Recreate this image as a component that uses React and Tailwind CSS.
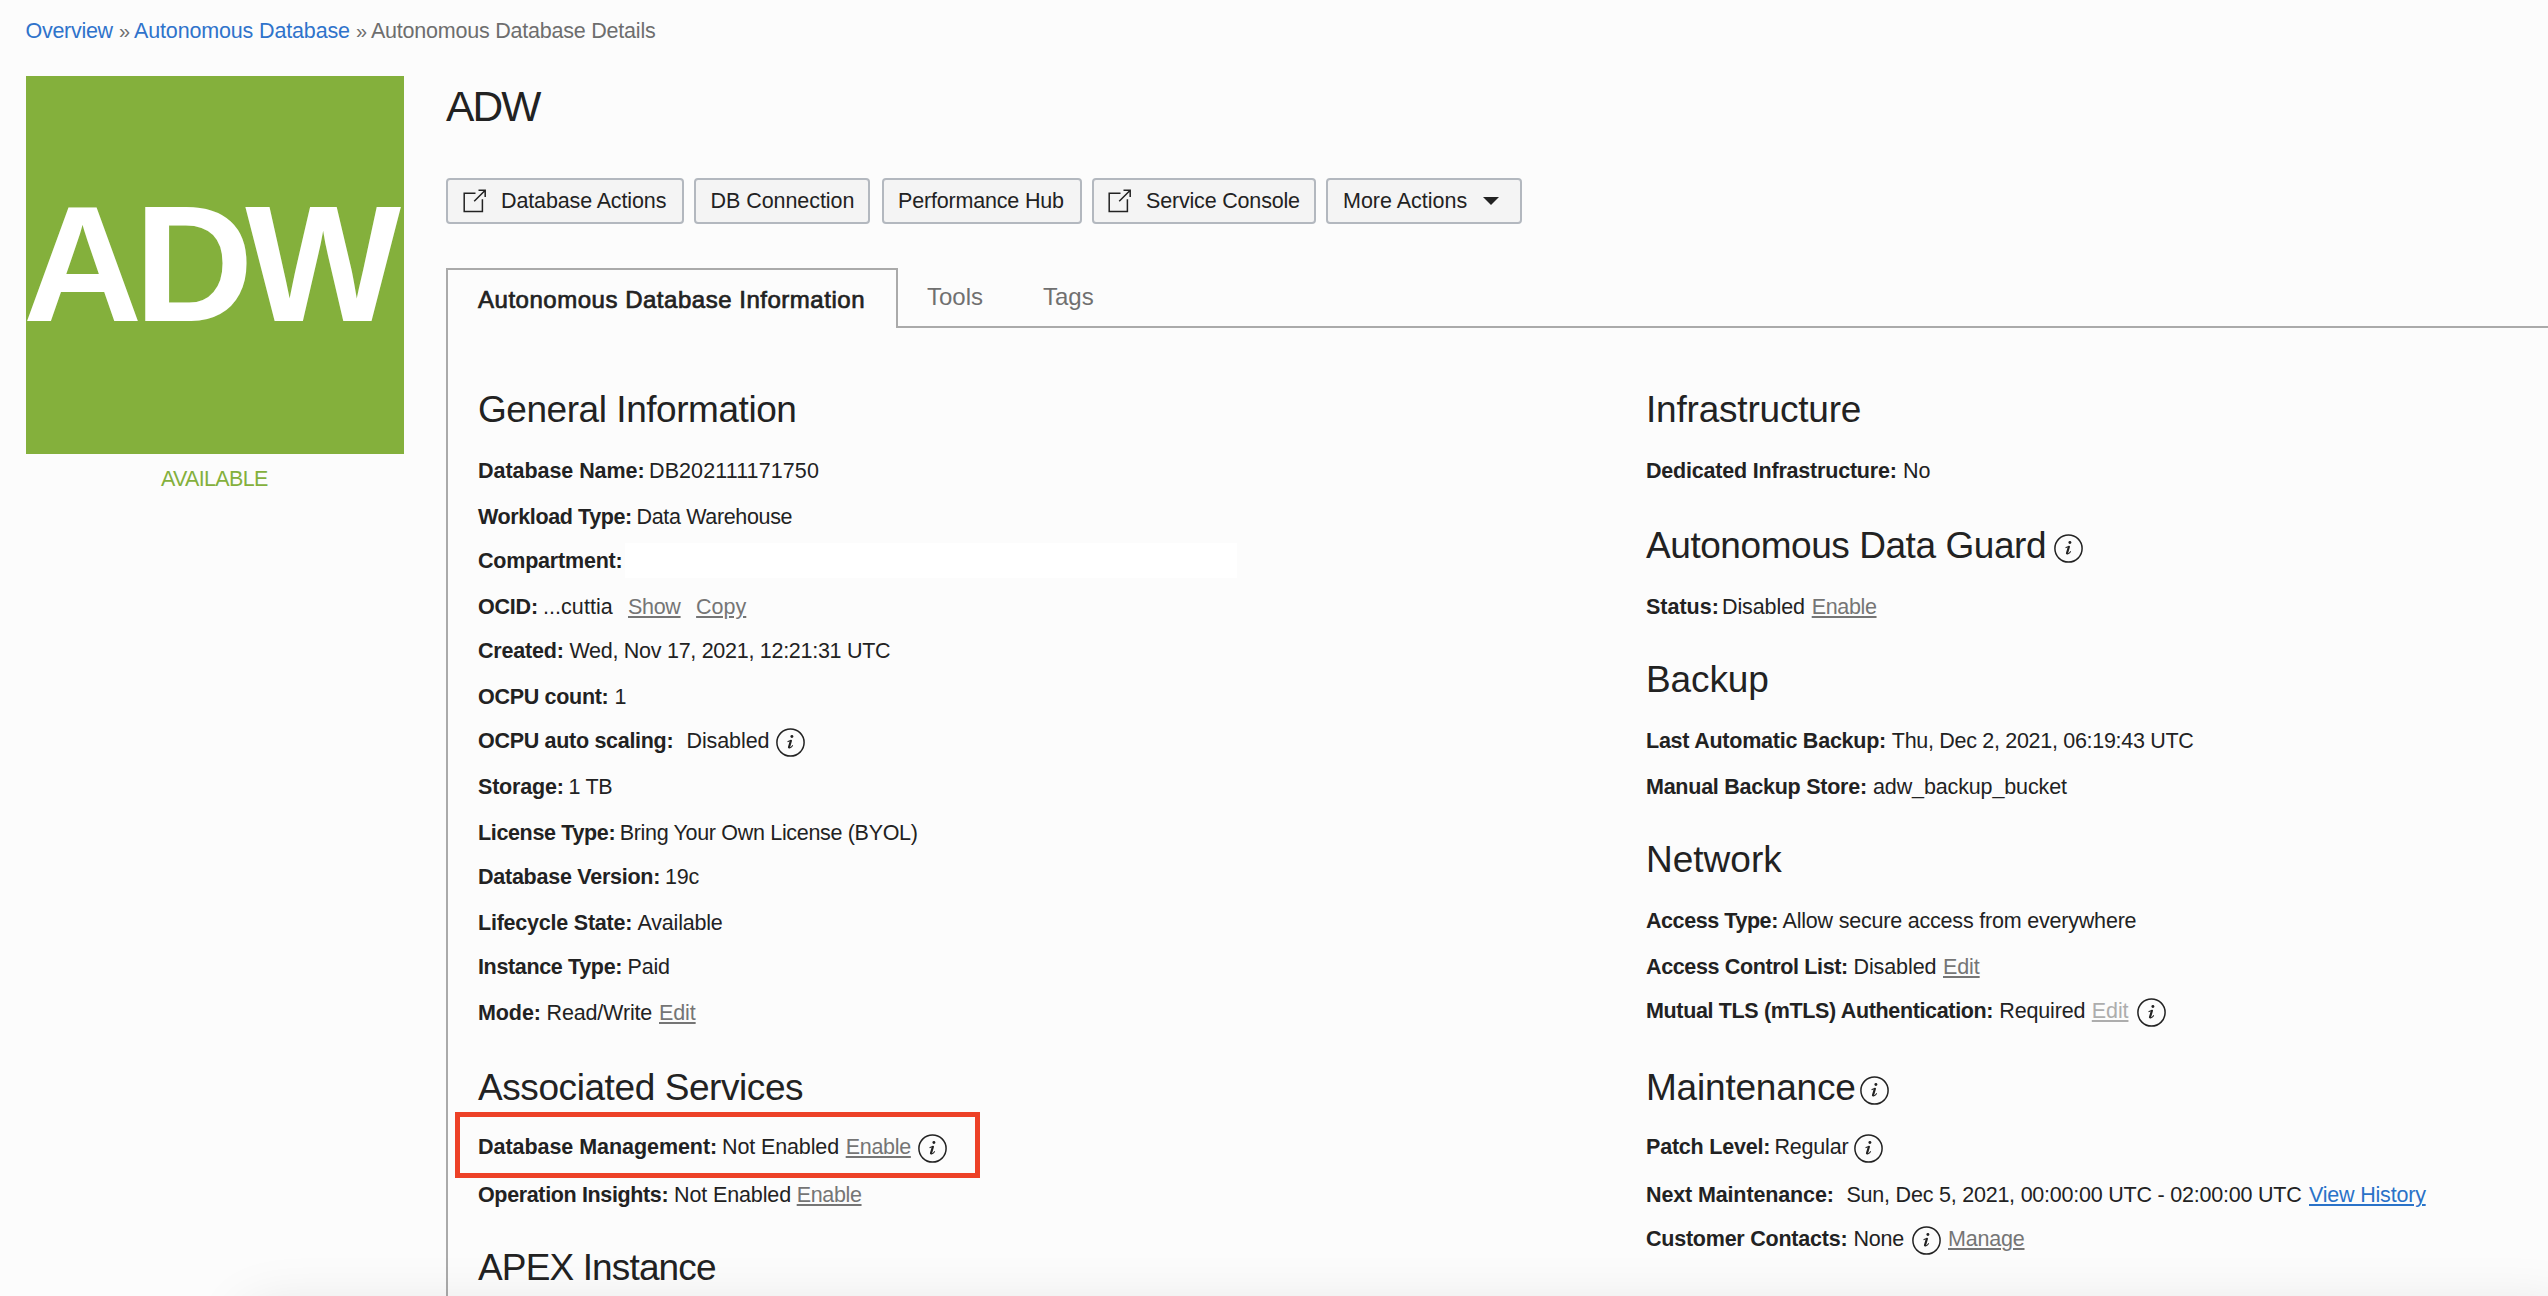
const label = 'font-bold shrink-0';
const value = 'shrink-0 pl-px';
const link = 'shrink-0 text-[#757575] underline decoration-2 underline-offset-2';
const linkDisabled = 'shrink-0 text-[#adadad] underline decoration-2 underline-offset-2';
const linkBlue = 'shrink-0 text-[#2a72c8] underline decoration-2 underline-offset-2';

function InfoIcon({ className = '' }) {
  return (
    <svg className={`h-[29px] w-[29px] shrink-0 ${className}`} viewBox="0 0 29 29" fill="none" stroke="#222" strokeLinecap="round">
      <circle cx="14.5" cy="14.5" r="13.6" strokeWidth="1.5" />
      <circle cx="15.9" cy="8.5" r="1.45" fill="#222" stroke="none" />
      <path d="M14.9 12.8L13 19.2" strokeWidth="2.2" />
      <path d="M12 13.6L14.8 12.6M13.1 19.8C14.4 20.1 15.6 19 16.5 17.7" strokeWidth="1.1" />
    </svg>
  );
}

function ExternalIcon() {
  return (
    <svg className="h-[24px] w-[24px] shrink-0" viewBox="0 0 24 24" fill="none" stroke="#222" strokeWidth="1.5">
      <path d="M12.5 4.2H1.2V22.6H19.4V10.2" />
      <path d="M15.5 1.3H22.2V7.9M22 1.5L11.2 12.3" />
    </svg>
  );
}

/* One line of "label: value" parts; each part is [text, classes] or 'info'. */
function Row({ h, parts }) {
  return (
    <div className={`flex shrink-0 items-start leading-[30px] whitespace-nowrap ${h}`}>
      {parts.map((part, i) =>
        part === 'info' ? (
          <InfoIcon key={i} className="mt-[2px]" />
        ) : (
          <span key={i} className={part[1]}>
            {part[0]}
          </span>
        ),
      )}
    </div>
  );
}

function Heading({ h, className, info, children }) {
  return (
    <h2 className={`flex shrink-0 items-start text-[37px] leading-[46px] whitespace-nowrap ${h}`}>
      <span className={`shrink-0 ${className}`}>{children}</span>
      {info && <InfoIcon className="mt-[11px]" />}
    </h2>
  );
}

const general = [
  ['h-[46px]', [['Database Name:', `${label} w-[170px] tracking-[-0.05px]`], ['DB202111171750', `${value} tracking-[0.1px]`]]],
  ['h-[44px]', [['Workload Type:', `${label} w-[157.5px] tracking-[-0.39px]`], ['Data Warehouse', `${value} tracking-[-0.35px]`]]],
  ['h-[46px]', [['Compartment:', `${label} w-[147px] tracking-[-0.2px]`], ['', '-mt-[3px] h-[35px] w-[611.5px] bg-white']]],
  [
    'h-[44px]',
    [
      ['OCID:', `${label} w-[64px] tracking-[-0.2px]`],
      ['...cuttia', `${value} w-[86px] tracking-[0.05px]`],
      ['Show', `${link} tracking-[-0.3px] mr-[15.5px]`],
      ['Copy', `${link} tracking-[0px]`],
    ],
  ],
  ['h-[46px]', [['Created:', `${label} w-[90.5px] tracking-[-0.2px]`], ['Wed, Nov 17, 2021, 12:21:31 UTC', `${value} tracking-[-0.28px]`]]],
  ['h-[44px]', [['OCPU count:', `${label} w-[135.5px] tracking-[-0.3px]`], ['1', value]]],
  ['h-[46px]', [['OCPU auto scaling:', `${label} w-[207.5px] tracking-[-0.3px]`], ['Disabled', `${value} w-[90.5px] tracking-[-0.1px]`], 'info']],
  ['h-[46px]', [['Storage:', `${label} w-[89.5px] tracking-[-0.2px]`], ['1 TB', `${value} tracking-[-0.3px]`]]],
  ['h-[44px]', [['License Type:', `${label} w-[140.7px] tracking-[-0.35px]`], ['Bring Your Own License (BYOL)', `${value} tracking-[-0.32px]`]]],
  ['h-[46px]', [['Database Version:', `${label} w-[186px] tracking-[-0.25px]`], ['19c', `${value} tracking-[-0.2px]`]]],
  ['h-[44px]', [['Lifecycle State:', `${label} w-[158.5px] tracking-[-0.22px]`], ['Available', `${value} tracking-[-0.2px]`]]],
  ['h-[46px]', [['Instance Type:', `${label} w-[148.5px] tracking-[-0.35px]`], ['Paid', `${value} tracking-[-0.2px]`]]],
  ['h-[67px]', [['Mode:', `${label} w-[67.5px] tracking-[-0.1px]`], ['Read/Write', `${value} w-[113.5px] tracking-[-0.15px]`], ['Edit', `${link} tracking-[-0.1px]`]]],
];

const services = [
  [
    'h-[48px]',
    [
      ['Database Management:', `${label} w-[243px] tracking-[-0.05px]`],
      ['Not Enabled', `${value} w-[124.7px] tracking-[-0.12px]`],
      ['Enable', `${link} w-[64px] mr-[8.7px] tracking-[-0.3px]`],
      'info',
    ],
  ],
  [
    'h-[65px]',
    [
      ['Operation Insights:', `${label} w-[195px] tracking-[-0.36px]`],
      ['Not Enabled', `${value} w-[123.7px] tracking-[-0.12px]`],
      ['Enable', `${link} w-[64px] tracking-[-0.35px]`],
    ],
  ],
];

const dedicated = [['h-[67px]', [['Dedicated Infrastructure:', `${label} w-[256px] tracking-[-0.2px]`], ['No', value]]]];

const guard = [
  [
    'h-[65px]',
    [
      ['Status:', `${label} w-[75px] tracking-[0px]`],
      ['Disabled', `${value} w-[90.7px] tracking-[-0.1px]`],
      ['Enable', `${link} tracking-[-0.35px]`],
    ],
  ],
];

const backup = [
  ['h-[46px]', [['Last Automatic Backup:', `${label} w-[244.8px] tracking-[-0.24px]`], ['Thu, Dec 2, 2021, 06:19:43 UTC', `${value} tracking-[-0.3px]`]]],
  ['h-[65px]', [['Manual Backup Store:', `${label} w-[226px] tracking-[-0.25px]`], ['adw_backup_bucket', `${value} tracking-[-0.13px]`]]],
];

const network = [
  ['h-[46px]', [['Access Type:', `${label} w-[135.5px] tracking-[-0.43px]`], ['Allow secure access from everywhere', `${value} tracking-[-0.2px]`]]],
  ['h-[44px]', [['Access Control List:', `${label} w-[206.5px] tracking-[-0.36px]`], ['Disabled', `${value} w-[90.5px] tracking-[-0.1px]`], ['Edit', `${link} tracking-[-0.1px]`]]],
  [
    'h-[69px]',
    [
      ['Mutual TLS (mTLS) Authentication:', `${label} w-[352.3px] tracking-[-0.35px]`],
      ['Required', `${value} w-[93.5px] tracking-[-0.15px]`],
      ['Edit', `${linkDisabled} mr-[8.5px] tracking-[-0.1px]`],
      'info',
    ],
  ],
];

const maintenance = [
  ['h-[48px]', [['Patch Level:', `${label} w-[127.5px] tracking-[-0.2px]`], ['Regular', `${value} w-[80.8px] tracking-[-0.2px]`], 'info']],
  [
    'h-[44px]',
    [
      ['Next Maintenance:', `${label} w-[199.5px] tracking-[-0.13px]`],
      ['Sun, Dec 5, 2021, 00:00:00 UTC - 02:00:00 UTC', `${value} w-[463.5px] tracking-[-0.22px]`],
      ['View History', `${linkBlue} tracking-[-0.2px]`],
    ],
  ],
  [
    'h-[44px]',
    [
      ['Customer Contacts:', `${label} w-[206.5px] tracking-[-0.23px]`],
      ['None', `${value} w-[59.5px] tracking-[-0.2px]`],
      'info',
      ['Manage', `${link} ml-[7px] tracking-[-0.2px]`],
    ],
  ],
];

const rows = (list) => list.map(([h, parts]) => <Row key={parts[0][0]} h={h} parts={parts} />);

function Button({ className, children }) {
  return (
    <button
      type="button"
      className={`flex h-[46px] shrink-0 items-center rounded-[4px] border-2 border-[#b3b8bf] bg-[#f4f4f4] whitespace-nowrap ${className}`}
    >
      {children}
    </button>
  );
}

export default function App() {
  return (
    <div className="relative flex h-[1296px] w-[2548px] flex-col overflow-hidden bg-[#fcfcfc] font-['Liberation_Sans',Arial,sans-serif] text-[21.5px] text-[#222]">
      <nav className="flex h-[76px] shrink-0 pt-[15.5px] pl-[25.5px] leading-[30px] whitespace-nowrap text-[#6e6e6e]">
        <a className="w-[93.5px] tracking-[-0.29px] text-[#2f73cb]">Overview</a>
        <span className="w-[15px] text-[20px]">»</span>
        <a className="w-[222px] tracking-[-0.15px] text-[#2f73cb]">Autonomous Database</a>
        <span className="w-[15px] text-[20px]">»</span>
        <span className="tracking-[-0.22px]">Autonomous Database Details</span>
      </nav>

      <div className="flex min-h-0 flex-1 pl-[26px]">
        <aside className="w-[378px] shrink-0">
          <div className="flex h-[378px] items-center bg-[#84b03c] text-[165px] leading-none font-bold tracking-[-8px] text-white">
            <span className="-ml-[3px] pb-[1px]">ADW</span>
          </div>
          <div className="pt-[10px] pr-[1.5px] text-center leading-[30px] tracking-[-0.67px] text-[#84b03c]">AVAILABLE</div>
        </aside>

        <main className="ml-[42px] flex min-w-0 flex-1 flex-col">
          <h1 className="h-[102px] shrink-0 pt-[6px] text-[42.5px] leading-[50px] tracking-[-1.9px]">ADW</h1>

          <div className="flex shrink-0">
            <Button className="mr-[10px] w-[238px] pl-[15px]">
              <ExternalIcon />
              <span className="ml-[14px] tracking-[-0.13px]">Database Actions</span>
            </Button>
            <Button className="mr-[12px] w-[176px] pl-[14.5px] tracking-[-0.06px]">DB Connection</Button>
            <Button className="mr-[10px] w-[200px] pl-[14px] tracking-[-0.18px]">Performance Hub</Button>
            <Button className="mr-[10px] w-[224px] pl-[13.5px]">
              <ExternalIcon />
              <span className="ml-[14.5px] tracking-[-0.18px]">Service Console</span>
            </Button>
            <Button className="w-[196px] pl-[15px]">
              <span className="w-[140px] text-left tracking-[0px]">More Actions</span>
              <svg className="h-[8px] w-[16px]" viewBox="0 0 16 8">
                <path d="M0 0H16L8 8Z" fill="#222" />
              </svg>
            </Button>
          </div>

          <div className="mt-[44px] flex h-[60px] shrink-0 text-[24px] leading-[30px] whitespace-nowrap text-[#707070]">
            <div className="w-[452px] shrink-0 border-2 border-b-0 border-[#aaa] pt-[15px] pl-[30px] tracking-[0.52px] text-[#222] [-webkit-text-stroke:0.7px_#222]">
              Autonomous Database Information
            </div>
            <div className="flex flex-1 border-b-2 border-[#aaa] pt-[13.5px] pl-[29px]">
              <span className="w-[116px]">Tools</span>
              <span>Tags</span>
            </div>
          </div>

          <div className="flex min-h-0 flex-1 border-l-2 border-[#aaa] pt-[59px] pl-[30px]">
            <section className="flex w-[1168px] shrink-0 flex-col">
              <Heading h="h-[69px]" className="tracking-[-0.45px]">General Information</Heading>
              {rows(general)}
              <Heading h="h-[67px]" className="tracking-[-0.42px]">Associated Services</Heading>
              <div className="relative">
                {rows(services)}
                <div className="absolute -top-[20px] -left-[23px] h-[66px] w-[525px] border-[5px] border-[#ed4127]" />
              </div>
              <Heading h="h-[51px]" className="tracking-[-0.86px]">APEX Instance</Heading>
            </section>

            <section className="flex flex-1 flex-col">
              <Heading h="h-[69px]" className="tracking-[-0.2px]">Infrastructure</Heading>
              {rows(dedicated)}
              <Heading h="h-[69px]" className="w-[408.4px] tracking-[-0.44px]" info>Autonomous Data Guard</Heading>
              {rows(guard)}
              <Heading h="h-[69px]" className="tracking-[-0.1px]">Backup</Heading>
              {rows(backup)}
              <Heading h="h-[69px]" className="tracking-[0px]">Network</Heading>
              {rows(network)}
              <Heading h="h-[67px]" className="w-[214.3px] tracking-[-0.2px]" info>Maintenance</Heading>
              {rows(maintenance)}
            </section>
          </div>
        </main>
      </div>

      <div className="pointer-events-none absolute top-[1306px] -right-[20px] left-[240px] h-[60px] rounded-l-[40px] shadow-[0_0_55px_rgba(0,0,0,0.1)]" />
    </div>
  );
}
